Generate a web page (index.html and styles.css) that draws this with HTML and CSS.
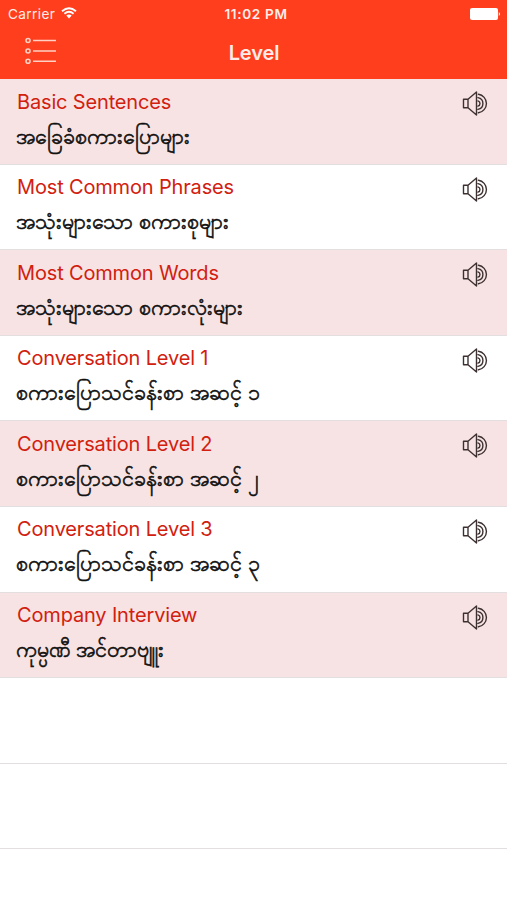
FILE: index.html
```html
<!DOCTYPE html>
<html lang="my"><head><meta charset="utf-8"><title>Level</title><link rel="stylesheet" href="styles.css"></head>
<body><main class="app">
<header class="header">
<div class="status"><div class="carrier"><span>Carrier</span><svg class="wifi" viewBox="0 0 16 12"><path d="M1 4.2Q8-1.8 15 4.2M3.4 6.8Q8 2.8 12.6 6.8"/><path class="dot" d="M5.3 8.6Q8 6.3 10.7 8.6L8 11.4Z"/></svg></div><span class="time">11:02 PM</span><svg class="battery" viewBox="0 0 32 12"><rect x="0" y="0" width="28" height="12" rx="2"/><path d="M28.8 4Q31.4 6 28.8 8Z"/></svg></div>
<nav class="nav"><svg class="menu" viewBox="0 0 32 28"><circle cx="4" cy="3.5" r="2"/><circle cx="4" cy="14" r="2"/><circle cx="4" cy="24.3" r="2"/><path d="M9 3.5H32M9 14H32M9 24.3H32"/></svg><h1>Level</h1></nav>
</header>
<ul class="list" id="list"></ul>
</main><script src="app.js"></script></body></html>
```
FILE: styles.css
```css
*{box-sizing:border-box}
body{margin:0;background:#fff;font-family:Inter,sans-serif}
.app{height:900px;overflow:hidden}
.header{height:79px;background:#ff3e1d;color:#ffece8}
.status{height:27px;display:grid;grid-template-columns:1fr auto 1fr;align-items:center;padding:0 7px 0 8px;font-size:13px}
.carrier{display:flex;align-items:center;gap:6px;font-size:13.6px;letter-spacing:.4px}
.wifi{width:16px;height:12px;fill:none;stroke:#fff;stroke-width:1.8;margin-top:-2px}
.wifi .dot{fill:#fff;stroke:none}
.time{font-size:13.6px;font-weight:600;letter-spacing:.65px;margin-left:4px}
.battery{width:32px;height:12px;fill:#fff;justify-self:end;margin-right:-2px}
.nav{height:52px;display:grid;grid-template-columns:1fr auto 1fr;align-items:center;padding:0 23px 0 24px}
.menu{width:32px;height:28px;fill:none;stroke:#ffd0c4;stroke-width:1.6;margin-top:-4px}
h1{font-size:20px;font-weight:600;letter-spacing:-.1px;margin:0}
.list{list-style:none;margin:0;padding:0}
.row{height:85.6px;border-bottom:1px solid #e3dfe0;display:flex;justify-content:space-between;padding:10.5px 18px 0 16px}
.shade{background:#f7e3e3}
.title{font-size:20px;line-height:24px;letter-spacing:-.16px;color:#d2200f;padding-left:1px}
.sub{font-size:21.4px;line-height:36px;margin-top:4px;color:#111;-webkit-text-stroke:.6px #111}
.sound{width:27px;height:26px;margin-top:.6px;fill:none;stroke:#3d3031;stroke-width:1.4;stroke-linejoin:round;stroke-linecap:round}
```
FILE: app.js
```js
const rows = [
  ["Basic Sentences", "အခြေခံစကားပြောများ"],
  ["Most Common Phrases", "အသုံးများသော စကားစုများ"],
  ["Most Common Words", "အသုံးများသော စကားလုံးများ"],
  ["Conversation Level 1", "စကားပြောသင်ခန်းစာ အဆင့် ၁"],
  ["Conversation Level 2", "စကားပြောသင်ခန်းစာ အဆင့် ၂"],
  ["Conversation Level 3", "စကားပြောသင်ခန်းစာ အဆင့် ၃"],
  ["Company Interview", "ကုမ္ပဏီ အင်တာဗျူး"]
];
const sound = `<svg class="sound" viewBox="0 0 27 26"><path d="M1.5 9.2H6V17.8H1.5ZM6 9.2L14.5 2V25L6 17.8M16 10.9A2.7 2.7 0 0 1 16 16.1M16 7.6A6 6 0 0 1 16 19.4M16.4 4.2A9.4 9.4 0 0 1 16.4 22.8"/></svg>`;
document.getElementById("list").innerHTML =
  rows.map(([t, s], i) => `<li class="row ${i % 2 ? "" : "shade"}"><div><div class="title">${t}</div><div class="sub">${s}</div></div>${sound}</li>`).join("") +
  `<li class="row"></li><li class="row"></li>`;
```
